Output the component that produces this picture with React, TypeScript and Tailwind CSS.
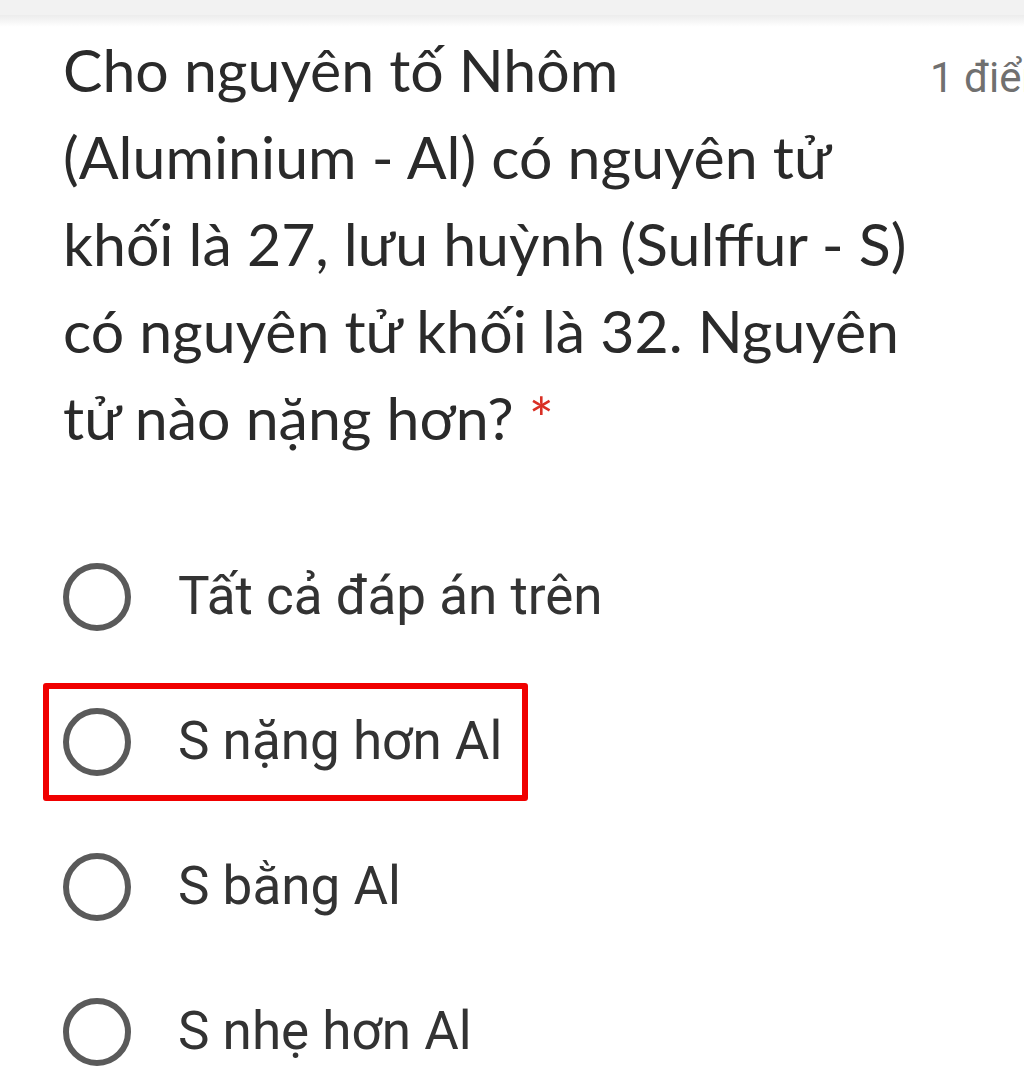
import React from "react";

function Radio() {
  return (
    <div className="w-[68px] h-[68px] shrink-0 rounded-full border-[6px] border-[#5a5a5a]" />
  );
}

function Option({ label }: { label: string }) {
  return (
    <div className="flex items-center gap-[47px]">
      <Radio />
      <span className="text-[53px] leading-none text-[#333] font-['Roboto',sans-serif]">{label}</span>
    </div>
  );
}

export default function App() {
  const options = ["Tất cả đáp án trên", "S nặng hơn Al", "S bằng Al", "S nhẹ hơn Al"];
  return (
    <div className="w-[1024px] h-[1081px] overflow-hidden bg-white flex flex-col">
      <div className="h-[15px] bg-[#f2f2f2] shrink-0" />
      <div className="h-[12px] shrink-0 bg-gradient-to-b from-[#ececec] to-white" />
      <div className="flex-1 relative pl-[63px]">
        <div className="flex items-start">
          <h1 className="w-[860px] shrink-0 text-[59px] leading-[87px] text-[#2a2a2a] font-['Lato',sans-serif] font-normal -mt-[1px]">
            Cho nguyên tố Nhôm
            <br />
            (Aluminium - Al) có nguyên tử
            <br />
            khối là 27, lưu huỳnh (Sulffur - S)
            <br />
            có nguyên tử khối là 32. Nguyên
            <br />
            tử nào nặng hơn? <span className="text-[#d93025]">*</span>
          </h1>
          <span className="whitespace-nowrap pt-[30px] text-[42px] leading-none text-[#707070] font-['Roboto',sans-serif] ml-[7px]">
            1 điểm
          </span>
        </div>
        <div className="mt-[63px] flex flex-col">
          {options.map((o, i) =>
            i === 1 ? (
              <div key={o} className="h-[145px] flex items-center">
                <div className="-ml-[20px] inline-flex border-[6px] border-[#f00000] rounded-[3px] pl-[14px] pr-[20px] py-[19px]">
                  <Option label={o} />
                </div>
              </div>
            ) : (
              <div key={o} className="h-[145px] flex items-center">
                <Option label={o} />
              </div>
            )
          )}
        </div>
      </div>
      <div className="h-[4px] bg-[#333] shrink-0" />
    </div>
  );
}
